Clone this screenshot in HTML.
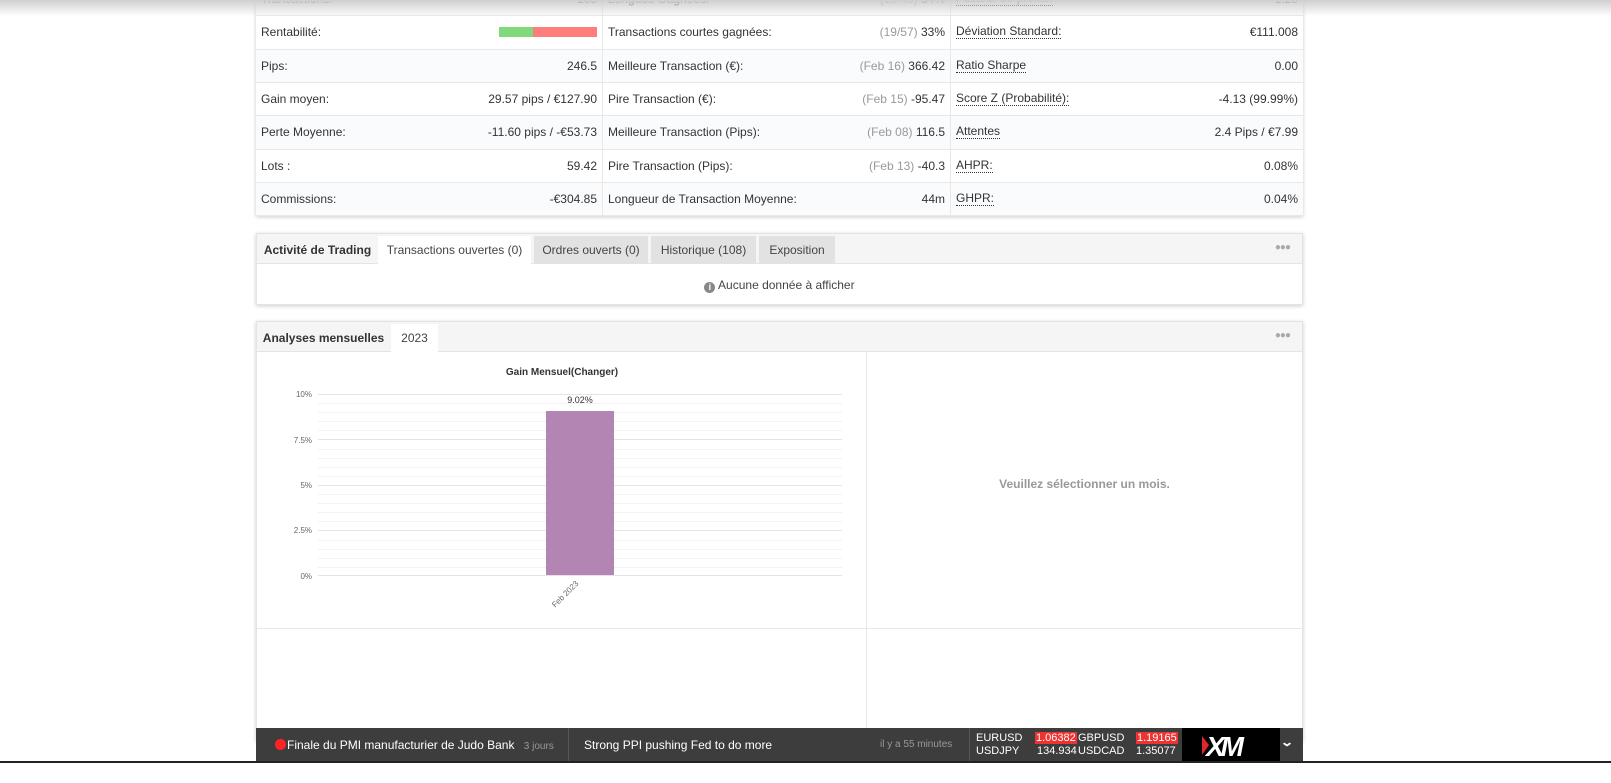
<!DOCTYPE html>
<html><head><meta charset="utf-8"><style>
*{box-sizing:border-box;margin:0;padding:0}
body{width:1611px;height:783px;overflow:hidden;background:#fff;font-family:"Liberation Sans",sans-serif;font-size:12px;color:#333;position:relative}
.abs{position:absolute}
.topsh{left:0;top:0;width:1611px;height:16px;background:linear-gradient(#cfcfcf,rgba(255,255,255,0));z-index:5}
.stats{left:256px;top:-17px;width:1047px;box-shadow:0 1px 4px rgba(0,0,0,.2)}
.row{height:33.33px;display:flex;border-bottom:1px solid #e8e8e8}
.row:nth-child(odd){background:#fafbfc}
.c{display:flex;justify-content:space-between;align-items:center;padding:0 5px;height:100%}
.c1{width:347px;border-right:1px solid #e8e8e8}.c2{width:348px;border-right:1px solid #e8e8e8}.c3{width:352px}
.g{color:#999}
.u{border-bottom:1px dotted #333;line-height:13px}
.panel{left:256px;width:1047px;background:#fff;box-shadow:0 1px 4px rgba(0,0,0,.2);border:1px solid #e4e4e4}
.hd{height:30px;background:#f5f5f5;border-bottom:1px solid #e4e4e4;position:relative}
.tab{position:absolute;top:2px;height:28px;line-height:28px;text-align:center;color:#444}
.dots{position:absolute;right:12px;top:8px;color:#aaa;font-size:10px;letter-spacing:-1px}
.bar{left:256px;top:728px;width:1047px;height:33px;background:#3d3d3d;color:#fff}
</style></head><body>
<div class="abs topsh"></div>
<div class="abs stats">
<div class="row"><div class="c c1"><span>Transactions:</span><span>105</span></div><div class="c c2"><span>Longues Gagnées:</span><span><span class="g">(16/48)</span> 34%</span></div><div class="c c3"><span class="u">Facteur de profits:</span><span>1.25</span></div></div>
<div class="row"><div class="c c1"><span>Rentabilité:</span><span style="display:flex;height:10px"><i style="width:34px;background:#80d97a"></i><i style="width:64px;background:#ff7e7b"></i></span></div><div class="c c2"><span>Transactions courtes gagnées:</span><span><span class="g">(19/57)</span> 33%</span></div><div class="c c3"><span class="u">Déviation Standard:</span><span>€111.008</span></div></div>
<div class="row"><div class="c c1"><span>Pips:</span><span>246.5</span></div><div class="c c2"><span>Meilleure Transaction (€):</span><span><span class="g">(Feb 16)</span> 366.42</span></div><div class="c c3"><span class="u">Ratio Sharpe</span><span>0.00</span></div></div>
<div class="row"><div class="c c1"><span>Gain moyen:</span><span>29.57 pips / €127.90</span></div><div class="c c2"><span>Pire Transaction (€):</span><span><span class="g">(Feb 15)</span> -95.47</span></div><div class="c c3"><span class="u">Score Z (Probabilité):</span><span>-4.13 (99.99%)</span></div></div>
<div class="row"><div class="c c1"><span>Perte Moyenne:</span><span>-11.60 pips / -€53.73</span></div><div class="c c2"><span>Meilleure Transaction (Pips):</span><span><span class="g">(Feb 08)</span> 116.5</span></div><div class="c c3"><span class="u">Attentes</span><span>2.4 Pips / €7.99</span></div></div>
<div class="row"><div class="c c1"><span>Lots :</span><span>59.42</span></div><div class="c c2"><span>Pire Transaction (Pips):</span><span><span class="g">(Feb 13)</span> -40.3</span></div><div class="c c3"><span class="u">AHPR:</span><span>0.08%</span></div></div>
<div class="row"><div class="c c1"><span>Commissions:</span><span>-€304.85</span></div><div class="c c2"><span>Longueur de Transaction Moyenne:</span><span>44m</span></div><div class="c c3"><span class="u">GHPR:</span><span>0.04%</span></div></div>
</div>

<div class="abs panel" style="top:233px;height:72px">
<div class="hd">
<div class="tab" style="left:0;width:121px;font-weight:bold;color:#333">Activité de Trading</div>
<div class="tab" style="left:121px;width:153px;background:#fff;height:29px">Transactions ouvertes (0)</div>
<div class="tab" style="left:277px;width:114px;background:#e2e2e2">Ordres ouverts (0)</div>
<div class="tab" style="left:394px;width:105px;background:#e2e2e2">Historique (108)</div>
<div class="tab" style="left:502px;width:76px;background:#e2e2e2">Exposition</div>
<div class="dots">●●●</div>
</div>
<div style="text-align:center;line-height:42px;color:#444"><span style="display:inline-block;width:11px;height:11px;border-radius:50%;background:#888;color:#fff;font-size:9px;line-height:11px;font-weight:bold;vertical-align:-1px">i</span> Aucune donnée à afficher</div>
</div>

<div class="abs panel" style="top:321px;height:420px">
<div class="hd">
<div class="tab" style="left:0;width:133px;font-weight:bold;color:#333">Analyses mensuelles</div>
<div class="tab" style="left:134px;width:47px;background:#fff;height:29px">2023</div>
<div class="dots">●●●</div>
</div>
</div>
<div class="abs" style="left:866px;top:352px;width:1px;height:376px;background:#e8e8e8"></div>
<div class="abs" style="left:257px;top:628px;width:1046px;height:1px;background:#e8e8e8"></div>
<div class="abs" style="left:866px;top:477px;width:437px;text-align:center;color:#999;font-weight:bold">Veuillez sélectionner un mois.</div>

<svg class="abs" style="left:256px;top:352px" width="610" height="276">
<text x="306" y="23" font-size="10" font-weight="bold" text-anchor="middle" fill="#333" font-family="Liberation Sans">Gain Mensuel(Changer)</text>
<g stroke="#f3f3f3"><line x1="62" x2="586" y1="51.5" y2="51.5"/><line x1="62" x2="586" y1="60.5" y2="60.5"/><line x1="62" x2="586" y1="69.5" y2="69.5"/><line x1="62" x2="586" y1="78.5" y2="78.5"/><line x1="62" x2="586" y1="97.5" y2="97.5"/><line x1="62" x2="586" y1="106.5" y2="106.5"/><line x1="62" x2="586" y1="115.5" y2="115.5"/><line x1="62" x2="586" y1="124.5" y2="124.5"/><line x1="62" x2="586" y1="142.5" y2="142.5"/><line x1="62" x2="586" y1="151.5" y2="151.5"/><line x1="62" x2="586" y1="160.5" y2="160.5"/><line x1="62" x2="586" y1="169.5" y2="169.5"/><line x1="62" x2="586" y1="188.5" y2="188.5"/><line x1="62" x2="586" y1="197.5" y2="197.5"/><line x1="62" x2="586" y1="206.5" y2="206.5"/><line x1="62" x2="586" y1="215.5" y2="215.5"/></g>
<g stroke="#e4e4e4"><line x1="62" x2="586" y1="42.5" y2="42.5"/><line x1="62" x2="586" y1="87.5" y2="87.5"/><line x1="62" x2="586" y1="133.5" y2="133.5"/><line x1="62" x2="586" y1="178.5" y2="178.5"/><line x1="62" x2="586" y1="223.5" y2="223.5"/></g>
<g font-size="8" fill="#666" text-anchor="end" font-family="Liberation Sans"><text x="56" y="45">10%</text><text x="56" y="91">7.5%</text><text x="56" y="136">5%</text><text x="56" y="181">2.5%</text><text x="56" y="227">0%</text></g>
<rect x="290" y="59" width="68" height="164" fill="#b385b3"/>
<text x="324" y="51" font-size="9" text-anchor="middle" fill="#333" font-family="Liberation Sans">9.02%</text>
<text x="0" y="0" font-size="8" fill="#666" text-anchor="end" transform="translate(323,232) rotate(-45)" font-family="Liberation Sans">Feb 2023</text>
</svg>

<div class="abs bar">
<div class="abs" style="left:19px;top:11px;width:11px;height:11px;border-radius:50%;background:#f22"></div>
<div class="abs" style="left:31px;top:10px">Finale du PMI manufacturier de Judo Bank <span style="color:#999;font-size:10px;margin-left:6px">3 jours</span></div>
<div class="abs" style="left:312px;top:0;width:1px;height:33px;background:#555"></div>
<div class="abs" style="left:328px;top:10px">Strong PPI pushing Fed to do more</div>
<div class="abs" style="left:624px;top:11px;color:#999;font-size:10px">il y a 55 minutes</div>
<div class="abs" style="left:713px;top:0;width:1px;height:33px;background:#555"></div>
<div class="abs" style="left:720px;top:4px;font-size:11px;line-height:13px">EURUSD<br>USDJPY</div>
<div class="abs" style="left:779px;top:4px;font-size:11px;line-height:13px;text-align:right"><span style="background:#e33;padding:0 1px">1.06382</span><br>134.934</div>
<div class="abs" style="left:822px;top:4px;font-size:11px;line-height:13px">GBPUSD<br>USDCAD</div>
<div class="abs" style="left:880px;top:4px;font-size:11px;line-height:13px"><span style="background:#e33;padding:0 1px">1.19165</span><br>1.35077</div>
<div class="abs" style="left:926px;top:0;width:98px;height:33px;background:#000"></div>
<svg class="abs" style="left:944px;top:3px" width="70" height="28"><polygon points="2,5 9,14 2,24" fill="#e0262b"/><text x="6" y="25" font-size="28" font-weight="bold" font-style="italic" fill="#fff" font-family="Liberation Sans" letter-spacing="-4">XM</text></svg>
<div class="abs" style="left:1026px;top:7px;font-size:12px;font-weight:bold;transform:scaleX(1.4)">⌄</div>
</div>
<div class="abs" style="left:0;top:761px;width:1611px;height:2px;background:#222"></div>
</body></html>
